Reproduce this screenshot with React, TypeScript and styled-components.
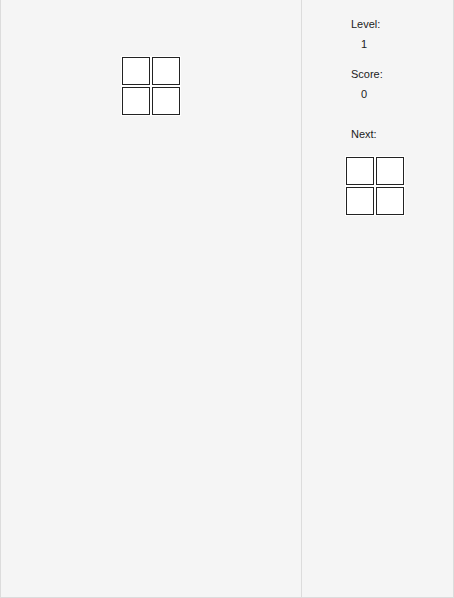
import React from 'react'
import styled, { createGlobalStyle } from 'styled-components'

const GlobalStyle = createGlobalStyle`
  html, body {
    margin: 0;
    padding: 0;
    background: #f5f5f5;
    font-family: 'Liberation Sans', Arial, sans-serif;
  }
`

type Cell = { x: number; y: number }

const CELL = 30

const Block = ({ x, y }: Cell) => (
  <BoardCell style={{ left: x * CELL + 120, top: y * CELL + 56 }}>
    <CellInner />
  </BoardCell>
)

const App = () => {
  const piece: Cell[] = [
    { x: 0, y: 0 },
    { x: 1, y: 0 },
    { x: 0, y: 1 },
    { x: 1, y: 1 },
  ]
  return (
    <>
      <GlobalStyle />
      <Game>
        <Board>
          {piece.map((c, i) => (
            <Block key={i} x={c.x} y={c.y} />
          ))}
        </Board>
        <Panel>
          <Label>Level:</Label>
          <Value>1</Value>
          <Label $gap={10}>Score:</Label>
          <Value>0</Value>
          <Label $gap={20}>Next:</Label>
          <Preview>
            {piece.map((_, i) => (
              <PreviewCell key={i}>
                <CellInner />
              </PreviewCell>
            ))}
          </Preview>
        </Panel>
      </Game>
    </>
  )
}

const Game = styled.div`
  display: flex;
  flex-direction: row;
  width: 454px;
  height: 598px;
`

const Board = styled.div`
  position: relative;
  width: 300px;
  height: 597px;
  border-left: 1px solid #dcdcdc;
  border-right: 1px solid #dcdcdc;
  border-bottom: 1px solid #dcdcdc;
`

const BoardCell = styled.div`
  position: absolute;
  width: 30px;
  height: 30px;
  box-sizing: border-box;
  padding: 1px;
  background: #fff;
`

const CellInner = styled.div`
  width: 100%;
  height: 100%;
  box-sizing: border-box;
  border: 1px solid #222;
  background: #fff;
`

const Panel = styled.div`
  display: flex;
  flex-direction: column;
  width: 152px;
  height: 598px;
  box-sizing: border-box;
  padding: 14px 0 0 49px;
  border-right: 1px solid #dcdcdc;
  border-bottom: 1px solid #dcdcdc;
`

const Label = styled.div<{ $gap?: number }>`
  font-size: 11px;
  line-height: 20px;
  color: #222;
  margin-top: ${({ $gap }) => $gap || 0}px;
`

const Value = styled.div`
  font-size: 11px;
  line-height: 20px;
  color: #222;
  padding-left: 10px;
`

const Preview = styled.div`
  display: grid;
  grid-template-columns: repeat(2, 30px);
  grid-template-rows: repeat(2, 30px);
  margin: 12px 0 0 -6px;
`

const PreviewCell = styled.div`
  width: 30px;
  height: 30px;
  box-sizing: border-box;
  padding: 1px;
  background: #fff;
`

export default App
